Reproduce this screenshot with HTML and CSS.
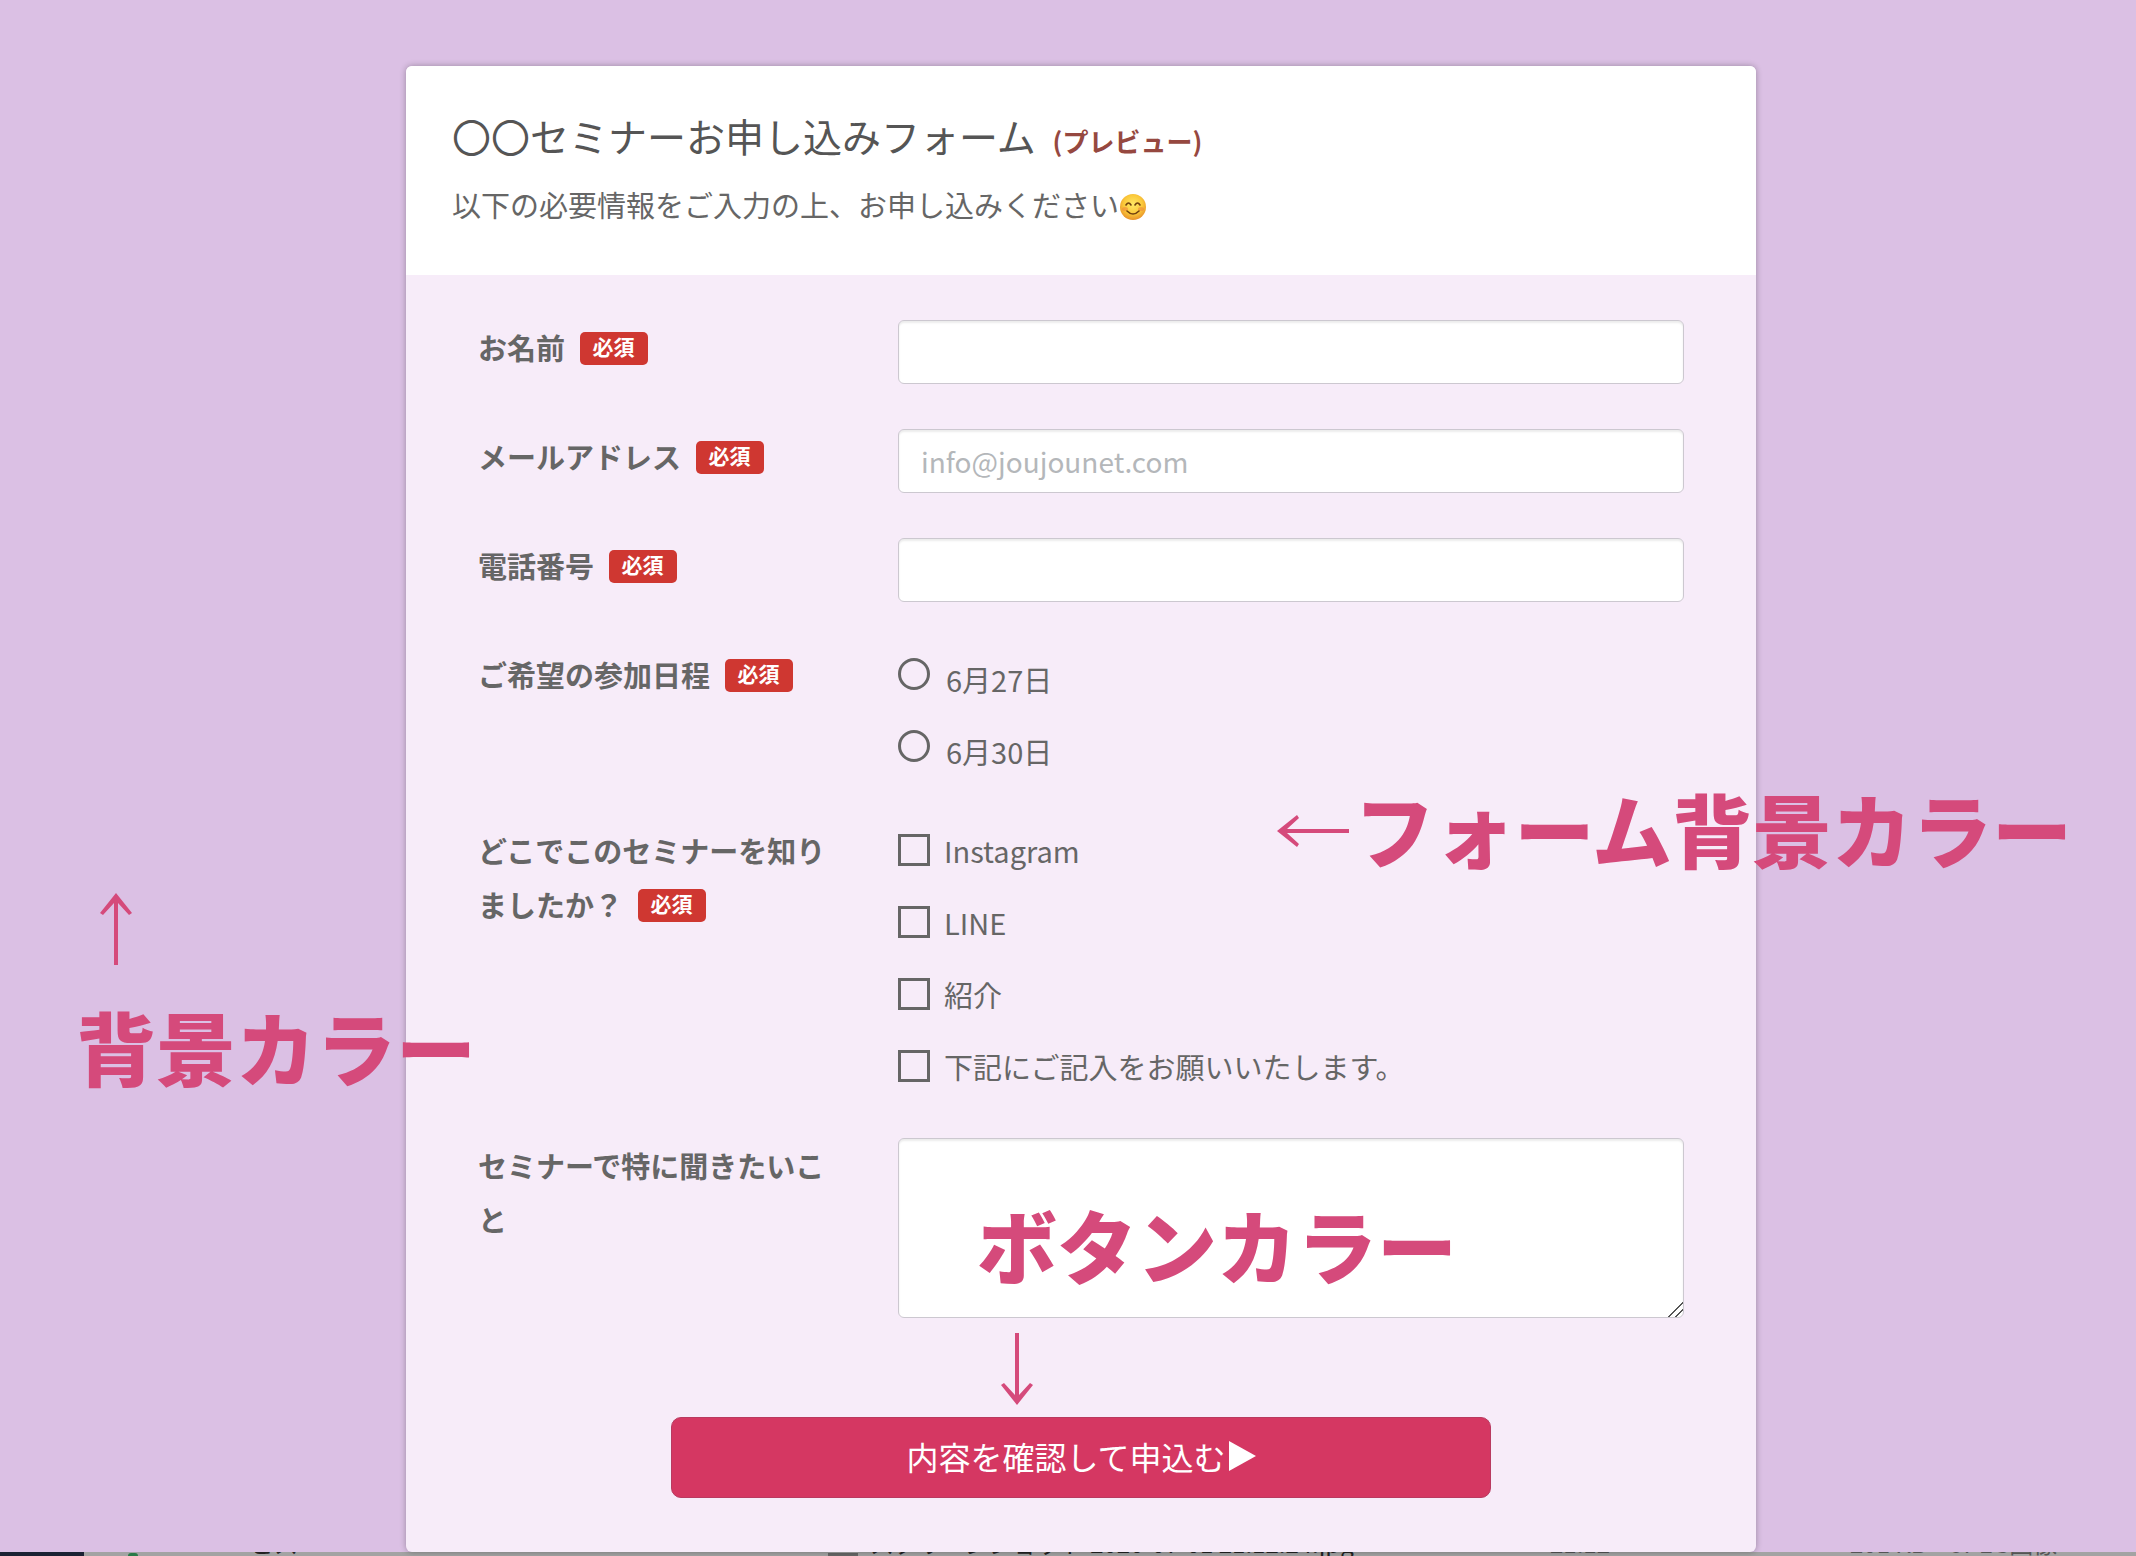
FILE: index.html
```html
<!DOCTYPE html>
<html lang="ja">
<head>
  <meta charset="UTF-8">
  <meta name="viewport" content="width=device-width, initial-scale=1">
  <title>〇〇セミナーお申し込みフォーム</title>
  <link rel="stylesheet" href="styles.css">
</head>
<body>
  <div class="page">
    <main class="card">
      <header class="card-header">
        <h1>〇〇セミナーお申し込みフォーム <span class="preview">(プレビュー)</span></h1>
        <p class="lead">以下の必要情報をご入力の上、お申し込みください<svg class="emoji" viewBox="0 0 28 28" role="img" aria-label="笑顔">
          <defs>
            <radialGradient id="face" cx="50%" cy="40%" r="60%">
              <stop offset="0" stop-color="#ffe866"/>
              <stop offset="0.6" stop-color="#fbc93a"/>
              <stop offset="1" stop-color="#e8922a"/>
            </radialGradient>
          </defs>
          <circle cx="14" cy="14" r="13" fill="url(#face)"/>
          <ellipse cx="6" cy="16" rx="3" ry="2" fill="#f08a3c" opacity="0.6"/>
          <ellipse cx="22" cy="16" rx="3" ry="2" fill="#f08a3c" opacity="0.6"/>
          <path d="M7 12q2.500-4 5 0M16 12q2.500-4 5 0M8 18q6 6 12 0" fill="none" stroke="#70400f" stroke-width="1.600" stroke-linecap="round"/>
        </svg></p>
      </header>

      <form class="form">
        <div class="row">
          <label class="row-label" for="name">お名前 <span class="required">必須</span></label>
          <input class="text-input" type="text" id="name">
        </div>
        <div class="row">
          <label class="row-label" for="email">メールアドレス <span class="required">必須</span></label>
          <input class="text-input" type="email" id="email" placeholder="info@joujounet.com">
        </div>
        <div class="row">
          <label class="row-label" for="tel">電話番号 <span class="required">必須</span></label>
          <input class="text-input" type="tel" id="tel">
        </div>
        <div class="row" role="radiogroup" aria-labelledby="date-label">
          <div class="row-label" id="date-label">ご希望の参加日程 <span class="required">必須</span></div>
          <div class="options radios">
            <label><input type="radio" name="date">6月27日</label>
            <label><input type="radio" name="date">6月30日</label>
          </div>
        </div>
        <div class="row" role="group" aria-labelledby="source-label">
          <div class="row-label" id="source-label">どこでこのセミナーを知りましたか？ <span class="required">必須</span></div>
          <div class="options">
            <label><input type="checkbox" name="source">Instagram</label>
            <label><input type="checkbox" name="source">LINE</label>
            <label><input type="checkbox" name="source">紹介</label>
            <label><input type="checkbox" name="source">下記にご記入をお願いいたします。</label>
          </div>
        </div>
        <div class="row">
          <label class="row-label" for="question">セミナーで特に聞きたいこと</label>
          <textarea class="text-input" id="question"></textarea>
        </div>
        <button class="submit" type="submit">内容を確認して申込む<svg class="play" viewBox="0 0 28 30" aria-hidden="true"><path d="M1 0L28 15L1 30z"/></svg></button>
      </form>
    </main>

    <!-- 注釈 -->
    <div class="note note-bg">
      <svg class="arrow-v" viewBox="0 0 32 72" aria-hidden="true"><path d="M14 72V10L3 22L0 20L16 0L32 20L29 22L18 10V72z"/></svg>
      <span>背景カラー</span>
    </div>
    <div class="note note-form">
      <svg class="arrow-h" viewBox="0 0 72 32" aria-hidden="true"><path d="M72 14H10L22 3L20 0L0 16L20 32L22 29L10 18H72z"/></svg>
      <span>フォーム背景カラー</span>
    </div>
    <div class="note note-button">
      <span>ボタンカラー</span>
      <svg class="arrow-v" viewBox="0 0 32 72" aria-hidden="true"><path d="M14 0V62L3 50L0 52L16 72L32 52L29 50L18 62V0z"/></svg>
    </div>
  </div>

  <!-- 下に見えるファイル一覧 -->
  <footer class="files">
    <span class="files-side"></span>
    <span class="files-dot"></span>
    <span class="files-tag">ピス</span>
    <span class="files-icon"></span>
    <span>スクリーンショット 2020-07-01 21.12.24.jpg</span>
    <span class="files-info">21:12</span>
    <span class="files-info">201 KB　JPEG画像</span>
  </footer>
</body>
</html>
```
FILE: styles.css
```css
:root {
  --bg: #dbc0e4;
  --form-bg: #f7ecf9;
  --button: #d53762;
  --note: #d54a7b;
  --required: #cf3731;
  --text: #666;
}

* {
  margin: 0;
  padding: 0;
  box-sizing: border-box;
}

body {
  background-color: var(--bg);
  color: var(--text);
  font-family: "Noto Sans CJK JP", sans-serif;
  font-size: 29px;
  line-height: 54px;
}

.page {
  position: relative;
  padding: 66px 380px 0 406px;
}

.card {
  background-color: var(--form-bg);
  border-radius: 6px;
  box-shadow: 0 0 6px rgba(0, 0, 0, 0.3);
}

.card-header {
  height: 209px;
  padding: 41px 46px 0;
  background-color: #fff;
  border-radius: 6px 6px 0 0;
}

h1 {
  color: #555;
  font-size: 39px;
  font-weight: 400;
  line-height: 56px;
}

.preview {
  margin-left: 8px;
  color: #964840;
  font-size: 26px;
  font-weight: 700;
}

.lead {
  margin-top: 8px;
}

.emoji {
  width: 28px;
  height: 28px;
  vertical-align: -4px;
}

/* フォーム */
.form {
  display: flex;
  flex-direction: column;
  gap: 45px;
  padding: 45px 72px 54px;
}

.row {
  display: grid;
  grid-template-columns: 360px 1fr;
  column-gap: 60px;
  align-items: start;
}

.row-label {
  font-weight: 700;
}

.required {
  display: inline-block;
  margin-left: 8px;
  padding: 0 13px 4px;
  background-color: var(--required);
  border-radius: 5px;
  color: #fff;
  font-size: 21px;
  line-height: 29px;
  vertical-align: 5px;
}

.text-input {
  display: block;
  width: 100%;
  height: 64px;
  padding: 0 22px;
  background-color: #fff;
  border: 1px solid #ccc8d0;
  border-radius: 6px;
  box-shadow: inset 0 2px 2px rgba(0, 0, 0, 0.08);
  color: var(--text);
  font-family: inherit;
  font-size: 28px;
}

.text-input::placeholder {
  color: #b4b7ba;
}

textarea.text-input {
  height: 180px;
  resize: vertical;
}

textarea::-webkit-resizer {
  background: linear-gradient(135deg, transparent 48%, #555 48%, #555 54%, transparent 54%, transparent 72%, #555 72%, #555 78%, transparent 78%);
}

.options {
  display: flex;
  flex-direction: column;
  align-items: flex-start;
  gap: 18px;
}

.options label {
  display: flex;
  align-items: center;
  gap: 14px;
}

.options input {
  appearance: none;
  width: 32px;
  height: 32px;
  border: 3px solid var(--text);
}

.radios {
  padding-top: 5px;
}

.radios label {
  gap: 16px;
}

.radios input {
  margin-bottom: 10px;
  border-radius: 50%;
}

.submit {
  display: flex;
  align-items: center;
  justify-content: center;
  align-self: center;
  width: 68%;
  height: 81px;
  margin-top: 54px;
  padding-bottom: 3px;
  background-color: var(--button);
  border: 1px solid #b93a60;
  border-radius: 10px;
  color: #fff;
  font-family: inherit;
  font-size: 32px;
  cursor: pointer;
}

.play {
  width: 28px;
  height: 30px;
  margin-left: 2px;
  fill: currentColor;
}

/* 注釈 */
.note {
  position: absolute;
  display: flex;
  color: var(--note);
  font-size: 80px;
  font-weight: 900;
  line-height: 80px;
  white-space: nowrap;
  pointer-events: none;
}

.note svg {
  fill: currentColor;
}

.arrow-v {
  width: 32px;
  height: 72px;
}

.arrow-h {
  width: 72px;
  height: 32px;
}

.note-bg {
  top: 893px;
  left: 76px;
  flex-direction: column;
  gap: 40px;
}

.note-bg svg {
  margin-left: 24px;
}

.note-form {
  top: 787px;
  right: 64px;
  align-items: flex-end;
  gap: 5px;
}

.note-form svg {
  margin-bottom: 20px;
}

.note-button {
  top: 1203px;
  left: 977px;
  flex-direction: column;
  gap: 50px;
}

.note-button svg {
  margin-left: 24px;
}

/* ファイル一覧 */
.files {
  display: grid;
  grid-template-columns: 84px 166px 578px 42px 680px 300px 1fr;
  grid-template-rows: 4px;
  align-items: end;
  overflow: hidden;
  background-color: #a3a3a3;
  color: #222;
  font-size: 24px;
  line-height: 27px;
  white-space: nowrap;
}

.files-side {
  height: 4px;
  background-color: #1b2233;
}

.files-dot {
  width: 10px;
  height: 3px;
  margin-left: 44px;
  background-color: #2a7a48;
  border-radius: 5px 5px 0 0;
}

.files-icon {
  width: 30px;
  height: 3px;
  background-color: #666;
}

.files-info {
  color: #555;
}
```
